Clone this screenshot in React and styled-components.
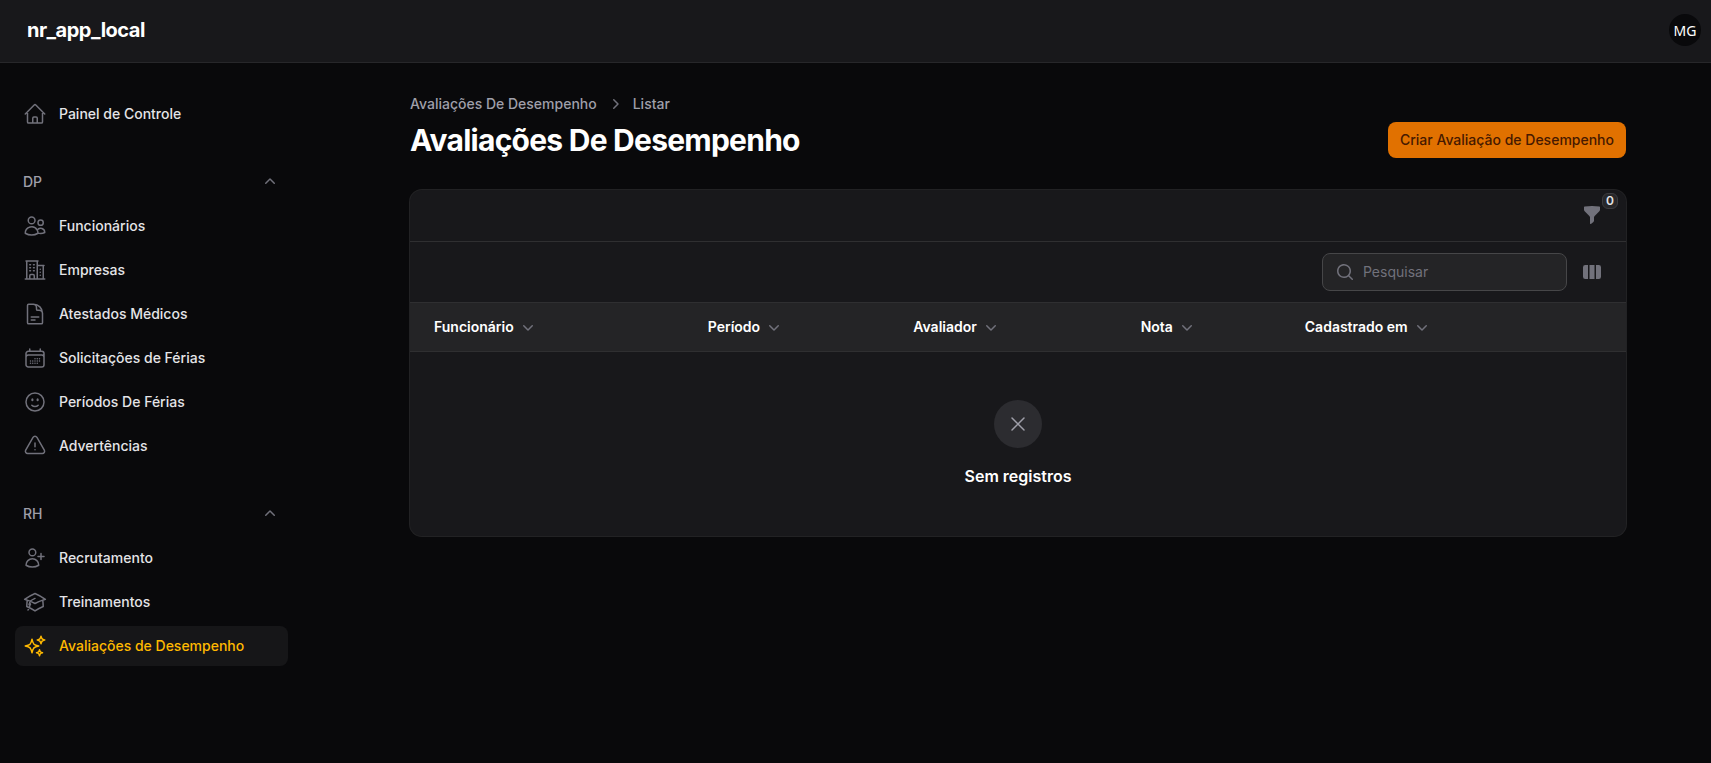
import React from "react";
import styled, { createGlobalStyle } from "styled-components";
import {
  HiOutlineHome,
  HiOutlineUsers,
  HiOutlineBuildingOffice2,
  HiOutlineDocumentText,
  HiOutlineCalendarDays,
  HiOutlineFaceSmile,
  HiOutlineExclamationTriangle,
  HiOutlineUserPlus,
  HiOutlineAcademicCap,
  HiOutlineSparkles,
  HiOutlineXMark,
  HiMiniChevronUp,
  HiMiniChevronDown,
  HiMiniChevronRight,
  HiMiniFunnel,
  HiMiniMagnifyingGlass,
  HiMiniViewColumns,
} from "react-icons/hi2";

const GlobalStyle = createGlobalStyle`
  *, *::before, *::after {
    box-sizing: border-box;
  }

  body {
    margin: 0;
    background: #09090b;
    color: #fff;
    font-family: Inter, "Liberation Sans", sans-serif;
    font-size: 14px;
    line-height: 20px;
  }

  svg {
    display: block;
    flex-shrink: 0;
  }
`;

const Topbar = styled.header`
  display: flex;
  align-items: center;
  justify-content: space-between;
  height: 63px;
  padding: 0 10px 2px 27px;
  background: #18181b;
  border-bottom: 1px solid #27272a;
`;

const Brand = styled.a`
  color: #fff;
  font-size: 20px;
  font-weight: 700;
  letter-spacing: -0.025em;
  text-decoration: none;
`;

const Avatar = styled.button`
  width: 32px;
  height: 32px;
  padding: 0;
  border: 0;
  border-radius: 50%;
  background: #09090b;
  color: #fff;
  font: 400 14px "Noto Sans", sans-serif;
  cursor: pointer;
`;

const Layout = styled.div`
  display: flex;
`;

const Sidebar = styled.nav`
  display: flex;
  flex-direction: column;
  flex-shrink: 0;
  gap: 28px;
  width: 325px;
  padding: 31px 37px 32px 15px;
`;

const Group = styled.section`
  display: flex;
  flex-direction: column;
  gap: 4px;
`;

const GroupToggle = styled.button`
  display: flex;
  align-items: center;
  justify-content: space-between;
  height: 40px;
  padding: 0 8px;
  border: 0;
  background: none;
  color: #9f9fa9;
  font: inherit;
  font-weight: 500;
  cursor: pointer;

  svg {
    color: #71717b;
  }
`;

const ItemList = styled.ul`
  display: flex;
  flex-direction: column;
  gap: 4px;
  margin: 0;
  padding: 0;
  list-style: none;
`;

const ItemLink = styled.a`
  display: flex;
  align-items: center;
  gap: 12px;
  padding: 8px;
  border-radius: 8px;
  background: ${({ $active }) => ($active ? "#161618" : "transparent")};
  color: ${({ $active }) => ($active ? "#ffb900" : "#e4e4e7")};
  font-weight: 500;
  text-decoration: none;

  svg {
    color: ${({ $active }) => ($active ? "#ffb900" : "#71717b")};
  }
`;

const Main = styled.main`
  flex: 1;
  min-width: 0;
  padding: 31px 32px;
`;

const Content = styled.div`
  display: flex;
  flex-direction: column;
  gap: 32px;
  max-width: 1216px;
  margin: 0 auto;
`;

const PageHeader = styled.div`
  display: flex;
  align-items: flex-end;
  justify-content: space-between;
  gap: 16px;
`;

const Breadcrumbs = styled.ol`
  display: flex;
  align-items: center;
  gap: 8px;
  margin: 0 0 8px;
  padding: 0;
  list-style: none;
`;

const Crumb = styled.li`
  display: flex;
  align-items: center;
  gap: 8px;

  svg {
    color: #71717b;
  }
`;

const CrumbLink = styled.a`
  color: #9f9fa9;
  font-weight: 500;
  text-decoration: none;
`;

const Title = styled.h1`
  margin: 0;
  font-size: 30px;
  font-weight: 700;
  letter-spacing: -0.025em;
  line-height: 36px;
`;

const CreateButton = styled.button`
  height: 36px;
  padding: 0 12px;
  border: 0;
  border-radius: 8px;
  background: #e17100;
  color: #461901;
  font: inherit;
  font-weight: 500;
  cursor: pointer;
`;

const Card = styled.section`
  overflow: hidden;
  border-radius: 12px;
  background: #18181b;
  box-shadow: 0 0 0 1px #222224;
`;

const Toolbar = styled.div`
  display: flex;
  align-items: center;
  justify-content: flex-end;
  gap: 16px;
  padding: ${({ $compact }) => ($compact ? "7px 24px 8px" : "12px 24px")};
  border-bottom: 1px solid #2f2f31;
`;

const IconButton = styled.button`
  position: relative;
  display: flex;
  align-items: center;
  justify-content: center;
  width: 36px;
  height: 36px;
  margin: 0 -8px;
  padding: 0;
  border: 0;
  background: none;
  color: #71717b;
  cursor: pointer;
`;

const Badge = styled.span`
  position: absolute;
  top: -4px;
  right: -8px;
  min-width: 16px;
  border: 1px solid #3c3c3f;
  border-radius: 6px;
  background: #27272a;
  color: #e4e4e7;
  font: 600 12px/14px Inter, sans-serif;
  text-align: center;
`;

const SearchBox = styled.label`
  display: flex;
  align-items: center;
  gap: 8px;
  width: 245px;
  height: 38px;
  margin: -1px;
  padding: 0 12px;
  border: 1px solid #464648;
  border-radius: 8px;
  background: #242426;
  color: #71717b;
`;

const SearchInput = styled.input`
  flex: 1;
  min-width: 0;
  padding: 0;
  border: 0;
  outline: 0;
  background: none;
  color: #fff;
  font: inherit;

  &::placeholder {
    color: #71717b;
    opacity: 1;
  }
`;

const Table = styled.table`
  width: 100%;
  border-collapse: separate;
  border-spacing: 0;
  table-layout: fixed;
`;

const HeaderCell = styled.th`
  width: ${({ $width }) => $width};
  padding: 14px 12px;
  border-bottom: 1px solid #2f2f31;
  background: #242426;
  text-align: left;

  &:first-child {
    padding-left: 24px;
  }
`;

const SortButton = styled.button`
  display: flex;
  align-items: center;
  gap: 4px;
  padding: 0;
  border: 0;
  background: none;
  color: #fff;
  font: inherit;
  font-weight: 600;
  cursor: pointer;

  svg {
    color: #71717b;
  }
`;

const EmptyCell = styled.td`
  padding: 48px 24px;
`;

const EmptyState = styled.div`
  display: flex;
  flex-direction: column;
  align-items: center;
  gap: 16px;
`;

const EmptyIcon = styled.div`
  display: flex;
  align-items: center;
  justify-content: center;
  width: 48px;
  height: 48px;
  border-radius: 50%;
  background: #2c2c30;
  color: #9f9fa9;
`;

const EmptyTitle = styled.h2`
  margin: 0;
  font-size: 16px;
  font-weight: 600;
  line-height: 24px;
`;

const groups = [
  {
    items: [{ label: "Painel de Controle", icon: HiOutlineHome }],
  },
  {
    label: "DP",
    items: [
      { label: "Funcionários", icon: HiOutlineUsers },
      { label: "Empresas", icon: HiOutlineBuildingOffice2 },
      { label: "Atestados Médicos", icon: HiOutlineDocumentText },
      { label: "Solicitações de Férias", icon: HiOutlineCalendarDays },
      { label: "Períodos De Férias", icon: HiOutlineFaceSmile },
      { label: "Advertências", icon: HiOutlineExclamationTriangle },
    ],
  },
  {
    label: "RH",
    items: [
      { label: "Recrutamento", icon: HiOutlineUserPlus },
      { label: "Treinamentos", icon: HiOutlineAcademicCap },
      {
        label: "Avaliações de Desempenho",
        icon: HiOutlineSparkles,
        active: true,
      },
    ],
  },
];

const columns = [
  { label: "Funcionário", width: "23.5%" },
  { label: "Período", width: "16.9%" },
  { label: "Avaliador", width: "18.7%" },
  { label: "Nota", width: "13.5%" },
  { label: "Cadastrado em", width: "auto" },
];

function NavGroup({ group }) {
  return (
    <Group>
      {group.label && (
        <GroupToggle type="button" aria-expanded="true">
          {group.label}
          <HiMiniChevronUp size={20} />
        </GroupToggle>
      )}
      <ItemList>
        {group.items.map(({ label, icon: Icon, active }) => (
          <li key={label}>
            <ItemLink
              href="#"
              $active={active}
              aria-current={active ? "page" : undefined}
            >
              <Icon size={24} />
              {label}
            </ItemLink>
          </li>
        ))}
      </ItemList>
    </Group>
  );
}

function RecordsTable() {
  return (
    <Table>
      <thead>
        <tr>
          {columns.map((column) => (
            <HeaderCell key={column.label} scope="col" $width={column.width}>
              <SortButton type="button">
                {column.label}
                <HiMiniChevronDown size={20} />
              </SortButton>
            </HeaderCell>
          ))}
        </tr>
      </thead>
      <tbody>
        <tr>
          <EmptyCell colSpan={columns.length}>
            <EmptyState>
              <EmptyIcon>
                <HiOutlineXMark size={24} />
              </EmptyIcon>
              <EmptyTitle>Sem registros</EmptyTitle>
            </EmptyState>
          </EmptyCell>
        </tr>
      </tbody>
    </Table>
  );
}

export default function App() {
  return (
    <>
      <GlobalStyle />
      <Topbar>
        <Brand href="#">nr_app_local</Brand>
        <Avatar type="button">MG</Avatar>
      </Topbar>
      <Layout>
        <Sidebar>
          {groups.map((group) => (
            <NavGroup key={group.label || "main"} group={group} />
          ))}
        </Sidebar>
        <Main>
          <Content>
            <PageHeader>
              <div>
                <Breadcrumbs>
                  <Crumb>
                    <CrumbLink href="#">Avaliações De Desempenho</CrumbLink>
                  </Crumb>
                  <Crumb>
                    <HiMiniChevronRight size={20} />
                    <CrumbLink href="#">Listar</CrumbLink>
                  </Crumb>
                </Breadcrumbs>
                <Title>Avaliações De Desempenho</Title>
              </div>
              <CreateButton type="button">
                Criar Avaliação de Desempenho
              </CreateButton>
            </PageHeader>
            <Card>
              <Toolbar $compact>
                <IconButton type="button" aria-label="Filtrar">
                  <HiMiniFunnel size={20} />
                  <Badge>0</Badge>
                </IconButton>
              </Toolbar>
              <Toolbar>
                <SearchBox>
                  <HiMiniMagnifyingGlass size={20} />
                  <SearchInput
                    type="search"
                    placeholder="Pesquisar"
                    aria-label="Pesquisar"
                  />
                </SearchBox>
                <IconButton type="button" aria-label="Colunas">
                  <HiMiniViewColumns size={20} />
                </IconButton>
              </Toolbar>
              <RecordsTable />
            </Card>
          </Content>
        </Main>
      </Layout>
    </>
  );
}
